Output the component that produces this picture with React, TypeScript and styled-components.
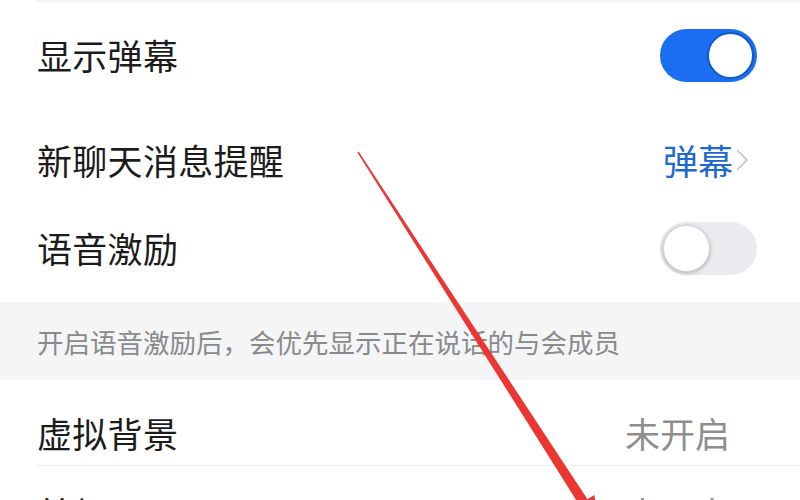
import styled, { createGlobalStyle } from "styled-components";

const GlobalStyle = createGlobalStyle`
  html, body {
    margin: 0;
    padding: 0;
    background: #ffffff;
    overflow: hidden;
  }
  body {
    font-family: "Noto Sans CJK SC", "Noto Sans", sans-serif;
  }
`;

const Page = styled.div`
  position: relative;
  width: 800px;
  height: 500px;
  overflow: hidden;
  background: #ffffff;
`;

const Row = styled.div<{ $h: number; $pt?: number; $pb?: number; $top?: boolean; $bottom?: boolean }>`
  box-sizing: border-box;
  height: ${(p) => p.$h}px;
  margin-left: 37px;
  padding-right: 43px;
  padding-top: ${(p) => p.$pt ?? 0}px;
  padding-bottom: ${(p) => p.$pb ?? 0}px;
  display: flex;
  align-items: center;
  justify-content: space-between;
  border-top: ${(p) => (p.$top ? "2px solid #f3f3f4" : "none")};
  border-bottom: ${(p) => (p.$bottom ? "1px solid #ececee" : "none")};
`;

const Label = styled.span`
  font-size: 35px;
  line-height: 1.2;
  color: #1c1c1c;
  letter-spacing: 0.3px;
`;

const Value = styled.span<{ $blue?: boolean }>`
  display: flex;
  align-items: center;
  font-size: 35px;
  line-height: 1.2;
  margin-right: ${(p) => (p.$blue ? 7 : 27)}px;
  color: ${(p) => (p.$blue ? "#2168d0" : "#8e8e8e")};
`;

const Chevron = styled.svg`
  width: 16px;
  height: 26px;
  margin-left: 1px;
`;

const Track = styled.div<{ $on: boolean }>`
  box-sizing: border-box;
  width: 97px;
  height: 53px;
  border-radius: 27px;
  padding: 3px;
  display: flex;
  align-items: center;
  justify-content: ${(p) => (p.$on ? "flex-end" : "flex-start")};
  background: ${(p) => (p.$on ? "#1a6ef2" : "#e9ebee")};
`;

const Knob = styled.div<{ $on: boolean }>`
  box-sizing: border-box;
  width: 47px;
  height: 47px;
  border-radius: 50%;
  background: #ffffff;
  border: ${(p) => (p.$on ? "2.5px solid #1657c6" : "1px solid #d6d6d6")};
  box-shadow: ${(p) => (p.$on ? "none" : "0 1px 4px rgba(0, 0, 0, 0.28)")};
`;

const Note = styled.div`
  box-sizing: border-box;
  height: 78px;
  padding-left: 37px;
  display: flex;
  align-items: center;
  background: #f4f5f7;
  font-size: 26.5px;
  color: #8a8a8a;
`;

const Arrow = styled.svg`
  position: absolute;
  left: 0;
  top: 0;
  width: 800px;
  height: 500px;
  pointer-events: none;
`;

const Switch = ({ on }: { on: boolean }) => (
  <Track $on={on}>
    <Knob $on={on} />
  </Track>
);

export default function App() {
  return (
    <Page>
      <GlobalStyle />
      <Row $h={112} $pb={4} $top>
        <Label>显示弹幕</Label>
        <Switch on />
      </Row>
      <Row $h={92} $pt={4}>
        <Label>新聊天消息提醒</Label>
        <Value $blue>
          弹幕
          <Chevron viewBox="0 0 16 26">
            <polyline points="3,3 13,13 3,23" fill="none" stroke="#c4c4c4" strokeWidth="1.6" />
          </Chevron>
        </Value>
      </Row>
      <Row $h={98} $pb={10}>
        <Label>语音激励</Label>
        <Switch on={false} />
      </Row>
      <Note>开启语音激励后，会优先显示正在说话的与会成员</Note>
      <Row $h={86} $pt={20} $bottom>
        <Label>虚拟背景</Label>
        <Value>未开启</Value>
      </Row>
      <Row $h={90} $pt={4}>
        <Label>美颜</Label>
        <Value>未开启</Value>
      </Row>
      <Arrow viewBox="0 0 800 500">
        <polygon
          points="358.6,151.6 587.5,499.3 594.2,495 602.2,531.4 572.4,509 579.1,504.7 357.4,152.4"
          fill="#ec3632"
        />
      </Arrow>
    </Page>
  );
}
